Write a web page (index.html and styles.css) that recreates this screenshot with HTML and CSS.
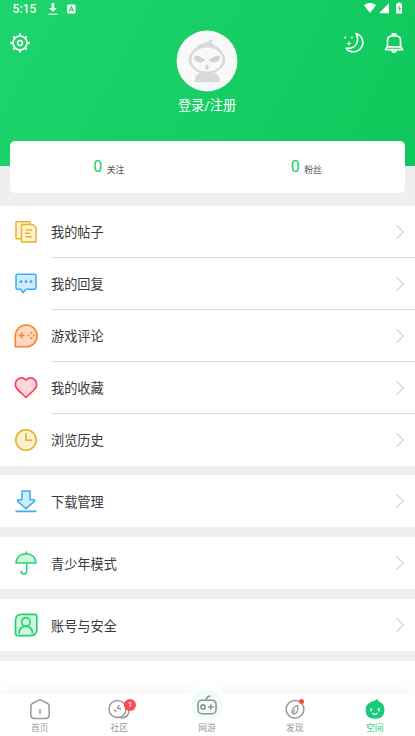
FILE: index.html
```html
<!DOCTYPE html>
<html lang="zh-CN">
<head>
<meta charset="utf-8">
<title>空间</title>
<link rel="stylesheet" href="styles.css">
</head>
<body>
<div class="app">
  <header class="hero">
    <div class="status">
      <span class="time">5:15</span>
      <svg class="s-down" width="10" height="13" viewBox="0 0 10 13"><path d="M3.6 0h2.6v5h2.6L4.9 8.800 1 5h2.600z" fill="#fff"/><path d="M.5 11.200h8.800" stroke="#fff" stroke-opacity=".7" stroke-width="1.500"/></svg>
      <svg class="s-app" width="9" height="10" viewBox="0 0 9 10"><rect x=".2" y=".5" width="8.300" height="9" rx="1" fill="#fff"/><path d="M2.200 7.500l2.200-5 2.200 5M3 6h2.800" fill="none" stroke="#1acc62" stroke-width="1.100"/></svg>
      <span class="spacer"></span>
      <svg width="42" height="14" viewBox="0 0 42 14"><path d="M1.500 3.200Q7-.1 12.600 3.200L7 10.300z" fill="#fff" stroke="#fff" stroke-linejoin="round"/><path d="M26 1v10.200H16z" fill="#fff"/><path d="M33 1.700h1.500V.4h3v1.300H39v9.800h-6z" fill="#fff"/><path d="M36.600 3.100l-2 3.700h1.600v3l1.800-3.900h-1.500z" fill="#16cb60"/></svg>
    </div>
    <div class="hero-main">
      <svg class="gear" width="20" height="20" viewBox="0 0 20 20" fill="none" stroke="#fff"><circle cx="10" cy="10" r="7" stroke-width="1.700"/><circle cx="10" cy="10" r="2.400" stroke-width="1.500"/><path d="M10 .3V3M10 17v2.700M.3 10H3M17 10h2.700M3.300 3.300l1.700 1.700M15 15l1.700 1.700M16.700 3.300L15 5M5 15l-1.700 1.700" stroke-width="1.800"/></svg>
      <div class="profile">
        <svg width="62" height="62" viewBox="0 0 62 62"><circle cx="31" cy="31" r="30.400" fill="#f9f9f9"/><path d="M18.500 52.300q.5-8.300 7-10.600h11.500q6.500 2.300 7 10.600z" fill="#d9d9d9"/><ellipse cx="31" cy="29.800" rx="18.300" ry="13.600" fill="#dadada"/><path d="M16 22Q21 14 31 11.800 35 9 38.800 9.300 35.500 11 35.500 13 38 14.500 41 16.500 45 19 47 24z" fill="#dadada"/><ellipse cx="31" cy="29.500" rx="15.400" ry="12" fill="#f9f9f9"/><path d="M17.900 26.800q2-2 5-.6l6.300 3.200q-2 3.700-6.500 2.900-4.700-1-4.800-5.500M44.100 26.800q-2-2-5-.6l-6.300 3.200q2 3.700 6.500 2.900 4.700-1 4.800-5.500" fill="#d4d4d4"/><ellipse cx="31" cy="37.300" rx="1.600" ry="2.700" fill="#d4d4d4"/></svg>
        <div class="login">登录/注册</div>
      </div>
      <div class="tools">
        <svg width="23" height="22" viewBox="0 0 23 22"><path d="M13 1.500A9.300 9.300 0 1 1 3.200 16.200Q11 17 13.700 11.500 15.800 6.500 13 1.500z" fill="none" stroke="#fff" stroke-width="1.600" stroke-linejoin="round"/><circle cx="2.200" cy="5.500" r="1" fill="#fff"/><circle cx="9" cy="5.500" r=".9" fill="#fff"/><path d="M6 9l.8 1.700 1.700.8-1.700.8L6 14l-.8-1.700-1.700-.8 1.700-.8z" fill="#fff"/></svg>
        <svg width="20" height="22" viewBox="0 0 20 22" fill="none" stroke="#fff" stroke-width="1.700"><path d="M3.500 15V8.500q0-4.500 4.500-4.500h4q4.500 0 4.500 4.500V15M3.200 14.800h13.600l1.800 2.800H1.400zM8.300 3.700V1.800h3.400v1.900M8 18q0 2 2 2t2-2" stroke-linejoin="round"/></svg>
      </div>
    </div>
  </header>
  <section class="stats">
    <div class="stat"><b>0</b><span>关注</span></div>
    <div class="stat"><b>0</b><span>粉丝</span></div>
  </section>
  <main class="menu">
    <section class="group">
      <div class="row"><svg class="icon" viewBox="0 0 26 26" fill="#fdf2d5" stroke="#e9b425" stroke-width="1.500" stroke-linejoin="round"><rect x="3" y="2.800" width="14" height="17" rx=".8"/><path d="M8.500 5.500H20l3 3V23H8.500z"/><path d="M12.500 11h6.500M11.800 14.300h5.500M12.500 17.700h6.500"/></svg><div class="label">我的帖子</div><svg class="chev" viewBox="0 0 10 16"><path d="M1.500 1.200L8.300 8l-6.800 6.800"/></svg></div>
      <div class="row"><svg class="icon" viewBox="0 0 26 26" fill="#d2ecfc" stroke="#36adf5" stroke-width="1.500" stroke-linejoin="round"><path d="M4.500 3.300h17q1.500 0 1.500 1.500v12q0 1.500-1.500 1.500h-8.200L10 21.600l-2-3.300H4.500Q3 18.300 3 16.800v-12q0-1.500 1.500-1.500z"/><g fill="#36adf5" stroke="none"><circle cx="8" cy="10.700" r="1.400"/><circle cx="13" cy="10.700" r="1.400"/><circle cx="18" cy="10.700" r="1.400"/></g></svg><div class="label">我的回复</div><svg class="chev" viewBox="0 0 10 16"><path d="M1.500 1.200L8.300 8l-6.800 6.800"/></svg></div>
      <div class="row"><svg class="icon" viewBox="0 0 26 26" fill="#fdd7bf" stroke="#fa842f" stroke-width="1.600" stroke-linejoin="round"><path d="M2.300 23.800V12.500A10.900 10.900 0 1 1 13.300 23.800z"/><path d="M5.600 12.500h6M8.600 9.500v6" fill="none"/><g fill="#fa842f" stroke="none"><circle cx="18.300" cy="9.800" r="1.100"/><circle cx="18.300" cy="15.200" r="1.100"/><circle cx="15.600" cy="12.500" r="1.100"/><circle cx="21" cy="12.500" r="1.100"/></g></svg><div class="label">游戏评论</div><svg class="chev" viewBox="0 0 10 16"><path d="M1.500 1.200L8.300 8l-6.800 6.800"/></svg></div>
      <div class="row"><svg class="icon" viewBox="0 0 26 26" fill="#fdd5da" stroke="#f9425a" stroke-width="1.700" stroke-linejoin="round"><path d="M13 5Q9.500 1.600 5.500 3.800 2 6 2.400 10.500q.4 2.500 2.600 4.500l8 7.500 8-7.500q2.200-2 2.600-4.500Q24 6 20.500 3.800 16.500 1.600 13 5z"/></svg><div class="label">我的收藏</div><svg class="chev" viewBox="0 0 10 16"><path d="M1.500 1.200L8.300 8l-6.800 6.800"/></svg></div>
      <div class="row"><svg class="icon" viewBox="0 0 26 26" fill="#fbefd2" stroke="#e5b022" stroke-width="1.600"><circle cx="13" cy="13" r="10.200"/><path d="M13 6.300V13.200h6" fill="none"/></svg><div class="label">浏览历史</div><svg class="chev" viewBox="0 0 10 16"><path d="M1.500 1.200L8.300 8l-6.800 6.800"/></svg></div>
    </section>
    <section class="group single">
      <div class="row"><svg class="icon" viewBox="0 0 26 26" fill="#d2ecfc" stroke="#40aeef" stroke-width="1.600" stroke-linejoin="round"><path d="M9 3h8v8.700h4.300v1.600L13 20.600l-8.300-7.300v-1.600H9zM2.500 23.400h21"/></svg><div class="label">下载管理</div><svg class="chev" viewBox="0 0 10 16"><path d="M1.500 1.200L8.300 8l-6.800 6.800"/></svg></div>
    </section>
    <section class="group single">
      <div class="row"><svg class="icon" viewBox="0 0 26 26" fill="none" stroke="#2bd471" stroke-width="1.600" stroke-linecap="round" stroke-linejoin="round"><path d="M3 13Q3.500 4 13 3.700 22.500 4 23 13H3z" fill="#d2f7df"/><path d="M13.300 2v1.700M13.700 13v8.200q-.3 2.900-2.800 2.900-2.600 0-2.800-2.800"/></svg><div class="label">青少年模式</div><svg class="chev" viewBox="0 0 10 16"><path d="M1.500 1.200L8.300 8l-6.800 6.800"/></svg></div>
    </section>
    <section class="group single">
      <div class="row"><svg class="icon" viewBox="0 0 26 26" fill="#d0f6df" stroke="#23d26b" stroke-width="1.700"><path d="M8.500 2.300h13q2.300 0 2.300 2.300v13q0 6-6 6h-13q-2.300 0-2.300-2.300v-13q0-6 6-6z"/><path d="M6 21.500q.3-7 6.800-7.300 6.400.3 6.800 7.300" fill="none"/><circle cx="12.900" cy="9.900" r="4.200"/></svg><div class="label">账号与安全</div><svg class="chev" viewBox="0 0 10 16"><path d="M1.500 1.200L8.300 8l-6.800 6.800"/></svg></div>
    </section>
    <section class="rest"></section>
  </main>
  <nav class="tabs">
    <div class="tab t1"><svg viewBox="0 0 26 24" fill="none" stroke="#999" stroke-width="1.500" stroke-linejoin="round"><path d="M5.300 6.500L12 3.100q1-.5 2 0l6.700 3.400q1.400 1 1.400 2.800v8.900q0 3.200-3.200 3.200H7.100q-3.200 0-3.200-3.200V9.300q0-1.800 1.400-2.800zM13 12v5.300"/></svg><span>首页</span></div>
    <div class="tab t2"><svg viewBox="0 0 26 24" fill="none" stroke="#999" stroke-width="1.500"><path d="M18.500 5.500q4.500 1.500 4.500 7.500 0 8-8.500 8"/><circle cx="11.500" cy="12" r="8.500" fill="#fff"/><path d="M13.100 8l-1.500 3.300 3.500.7M8 12.700l2.300 2.200"/></svg><i class="badge">1</i><span>社区</span></div>
    <div class="tab t3"><div class="halo"><svg viewBox="0 0 26 26" fill="none" stroke="#8f9392" stroke-width="1.600"><rect x="4" y="8.200" width="18" height="13.500" rx="4"/><path d="M12.300 8.200q-.3-3.700 4.200-4.200M14 15h5.600M16.800 12.200v5.600"/><circle cx="9" cy="15" r="2.100"/></svg></div><span>网游</span></div>
    <div class="tab t4"><svg viewBox="0 0 26 24" fill="none" stroke="#999" stroke-width="1.500"><circle cx="13" cy="12.300" r="8.900"/><path d="M15.700 8.300q.9 5.400-1.900 8-1.600 1.300-2.900.3-1-1.200-.7-3 1-4 5.500-5.300zM10.600 17l2.300-4.200" stroke-width="1.300"/></svg><i class="dot"></i><span>发现</span></div>
    <div class="tab t5"><svg viewBox="0 0 26 24"><path d="M16.300 2q-1 1.600.7 2.600 5.500 2.600 5.500 8.200 0 9-9.500 9T3.500 12.800q0-5.800 6.500-8.300Q14 3.500 14.500 2.500z" fill="#17cb78"/><path d="M8.300 11.300l1.500 1.200-1.200 1.800M17.700 11.300l-1.500 1.200 1.200 1.800M10.500 15.800q2.500 3.300 5 0" fill="none" stroke="#fff" stroke-width="1.200"/></svg><span class="on">空间</span></div>
  </nav>
</div>
</body>
</html>
```
FILE: styles.css
```css
* { box-sizing: border-box; }
body { margin: 0; font-family: Roboto, "Noto Sans CJK SC", sans-serif; }
svg { display: block; flex: none; }
.app { width: 415px; height: 736px; background: #efefef; position: relative; overflow: hidden; display: flex; flex-direction: column; }
.hero { height: 166px; flex: none; background: linear-gradient(118deg, #1dd56c, #0fc75b); }
.status { height: 18px; padding: 0 10px 0 12.500px; display: flex; align-items: center; color: #fff; }
.time { font-size: 12px; font-weight: 500; letter-spacing: .1px; width: 35.500px; }
.s-app { margin-left: 9px; }
.spacer { flex: 1; }
.hero-main { display: grid; grid-template-columns: 1fr auto 1fr; padding: 12px 11px 0 10px; }
.gear { margin-top: 3px; }
.profile { display: flex; flex-direction: column; align-items: center; }
.login { color: #fff; font-size: 13.200px; line-height: 20px; margin-top: 4px; }
.tools { display: flex; justify-content: flex-end; gap: 18px; margin: 2px .5px 0 0; }
.stats { flex: none; height: 52px; margin: -25.500px 10px 13.500px; background: #fff; border-radius: 5px; display: flex; position: relative; }
.stat { flex: 1; display: flex; align-items: flex-start; justify-content: center; gap: 4.500px; padding: 15px 0 0; }
.stat b { font-size: 16px; font-weight: 400; color: #17cb68; line-height: 22px; }
.stat span { font-size: 8.800px; line-height: 14px; margin-top: 7px; color: #555; }
.menu { flex: 1; display: flex; flex-direction: column; gap: 10px; }
.group { background: #fff; flex: none; }
.group:first-child { margin-bottom: -.7px; }
.row { height: 52px; display: flex; align-items: center; padding: 0 10.500px 0 12.500px; background: linear-gradient(#dcdcdc, #dcdcdc) 51px 100% / 100% 1px no-repeat; }
.row:last-child { background: none; }
.icon { width: 26px; height: 26px; margin: 0 12.500px 1px 0; }
.label { flex: 1; height: 52px; line-height: 54px; font-size: 13.200px; color: #3a3a3a; }
.single .label { line-height: 55px; }
.single .icon { margin-bottom: 0; }
.chev { width: 10px; height: 16px; fill: none; stroke: #d8d8d8; stroke-width: 1.400; }
.rest { background: #fff; flex: 1; }
.tabs { position: absolute; left: 0; right: 0; bottom: 0; height: 42px; background: #fff; display: flex; box-shadow: 0 -6px 12px rgba(0,0,0,.03); }
.tab { position: relative; display: flex; flex-direction: column; align-items: center; font-size: 8.800px; color: #999; padding-top: 3px; width: 79.500px; }
.tab > svg { width: 26px; height: 24px; }
.tab span { line-height: 13px; margin-top: 1px; }
.tab .on { color: #17cb78; }
.t3 { width: 96px; padding-top: 0; }
.t4 { width: 79.500px; }
.t5 { width: 80.500px; }
.halo { width: 42px; height: 42px; margin-top: -10px; margin-bottom: -5px; border-radius: 50%; background: radial-gradient(circle, #effdf5 0 15px, #fff 16px); display: flex; align-items: center; justify-content: center; }
.halo svg { width: 26px; height: 26px; margin-bottom: 1px; }
.badge { position: absolute; left: 44.500px; top: 5px; width: 12px; height: 12px; border-radius: 50%; background: #fb4a55; color: #fff; font: 500 8px/12px Roboto, sans-serif; text-align: center; }
.dot { position: absolute; left: 44px; top: 5px; width: 5px; height: 5px; border-radius: 50%; background: #fa4b3c; }
```
